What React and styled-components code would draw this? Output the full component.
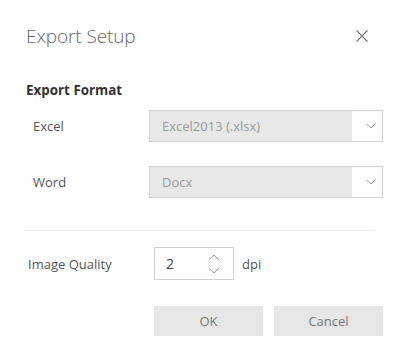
import React from "react";
import styled, { createGlobalStyle } from "styled-components";

const Global = createGlobalStyle`
  html, body { margin: 0; padding: 0; background: #fff; }
  body { font-family: "Open Sans", "Noto Sans", sans-serif; }
  * { box-sizing: border-box; }
`;

const Dialog = styled.div`
  width: 400px;
  height: 343px;
  padding: 22px 17px 0 24px;
  display: flex;
  flex-direction: column;
`;

const Header = styled.div`
  display: flex;
  align-items: center;
  justify-content: space-between;
  height: 28px;
  padding: 0 15px 0 2px;
`;

const Title = styled.h1`
  margin: 0;
  font-size: 19px;
  font-weight: 300;
  color: #666;
  letter-spacing: -0.1px;
  line-height: 28px;
`;

const CloseButton = styled.button`
  width: 12px;
  height: 12px;
  padding: 0;
  border: 0;
  background: none;
  display: flex;
  cursor: pointer;
`;

const SectionTitle = styled.h2`
  margin: 30px 0 0 2px;
  font-size: 13.4px;
  font-weight: 700;
  color: #333;
  line-height: 20px;
`;

const FormRow = styled.div`
  display: grid;
  grid-template-columns: 125px 1fr;
  align-items: center;
  margin-top: ${(p) => p.$top}px;
`;

const Label = styled.label`
  padding-left: ${(p) => p.$indent}px;
  font-size: 13px;
  color: #555;
  line-height: 20px;
`;

const Select = styled.div`
  display: flex;
  height: 32px;
  border: 1px solid #d2d2d2;
`;

const SelectValue = styled.div`
  flex: 1;
  background: #e8e8e8;
  color: #999;
  font-size: 13px;
  padding-left: 12px;
  display: flex;
  align-items: center;
`;

const SelectArrow = styled.div`
  width: 30px;
  background: #fff;
  display: flex;
  align-items: center;
  justify-content: center;
  padding-left: 8px;
`;

const Divider = styled.hr`
  margin: 32px 8px 0 0;
  border: 0;
  border-top: 1px solid #ececec;
  height: 0;
`;

const QualityRow = styled.div`
  display: grid;
  grid-template-columns: 130px auto auto;
  justify-content: start;
  align-items: center;
  margin-top: 16px;
`;

const NumberBox = styled.div`
  width: 80px;
  height: 33px;
  border: 1px solid #d2d2d2;
  display: flex;
  align-items: center;
  padding: 0 14px 0 11px;
`;

const NumberValue = styled.span`
  flex: 1;
  font-size: 14px;
  color: #444;
`;

const Spinner = styled.div`
  display: flex;
  flex-direction: column;
  gap: 8px;
`;

const Unit = styled.span`
  margin-left: 8px;
  font-size: 13px;
  color: #555;
`;

const Footer = styled.div`
  display: flex;
  justify-content: flex-end;
  gap: 11px;
  margin-top: 26px;
`;

const Button = styled.button`
  width: 109px;
  height: 30px;
  border: 0;
  background: #e6e6e6;
  color: #777;
  font-family: inherit;
  font-size: 13px;
  padding: 0;
  cursor: pointer;
`;

const Chevron = ({ up }) => (
  <svg width="10" height="6" viewBox="0 0 10 6" fill="none">
    <path
      d={up ? "M0.5 5.5 L5 1 L9.5 5.5" : "M0.5 0.5 L5 5 L9.5 0.5"}
      stroke="#9a9a9a"
      strokeWidth="1"
    />
  </svg>
);

export default function App() {
  return (
    <>
      <Global />
      <Dialog>
        <Header>
          <Title>Export Setup</Title>
          <CloseButton aria-label="Close">
            <svg width="12" height="12" viewBox="0 0 12 12">
              <path d="M0.5 0.5 L11.5 11.5 M11.5 0.5 L0.5 11.5" stroke="#777" strokeWidth="1.1" />
            </svg>
          </CloseButton>
        </Header>
        <SectionTitle>Export Format</SectionTitle>
        <FormRow $top={10}>
          <Label $indent={9}>Excel</Label>
          <Select>
            <SelectValue>Excel2013 (.xlsx)</SelectValue>
            <SelectArrow><Chevron /></SelectArrow>
          </Select>
        </FormRow>
        <FormRow $top={24}>
          <Label $indent={9}>Word</Label>
          <Select>
            <SelectValue>Docx</SelectValue>
            <SelectArrow><Chevron /></SelectArrow>
          </Select>
        </FormRow>
        <Divider />
        <QualityRow>
          <Label $indent={4}>Image Quality</Label>
          <NumberBox>
            <NumberValue>2</NumberValue>
            <Spinner>
              <Chevron up />
              <Chevron />
            </Spinner>
          </NumberBox>
          <Unit>dpi</Unit>
        </QualityRow>
        <Footer>
          <Button>OK</Button>
          <Button>Cancel</Button>
        </Footer>
      </Dialog>
    </>
  );
}
